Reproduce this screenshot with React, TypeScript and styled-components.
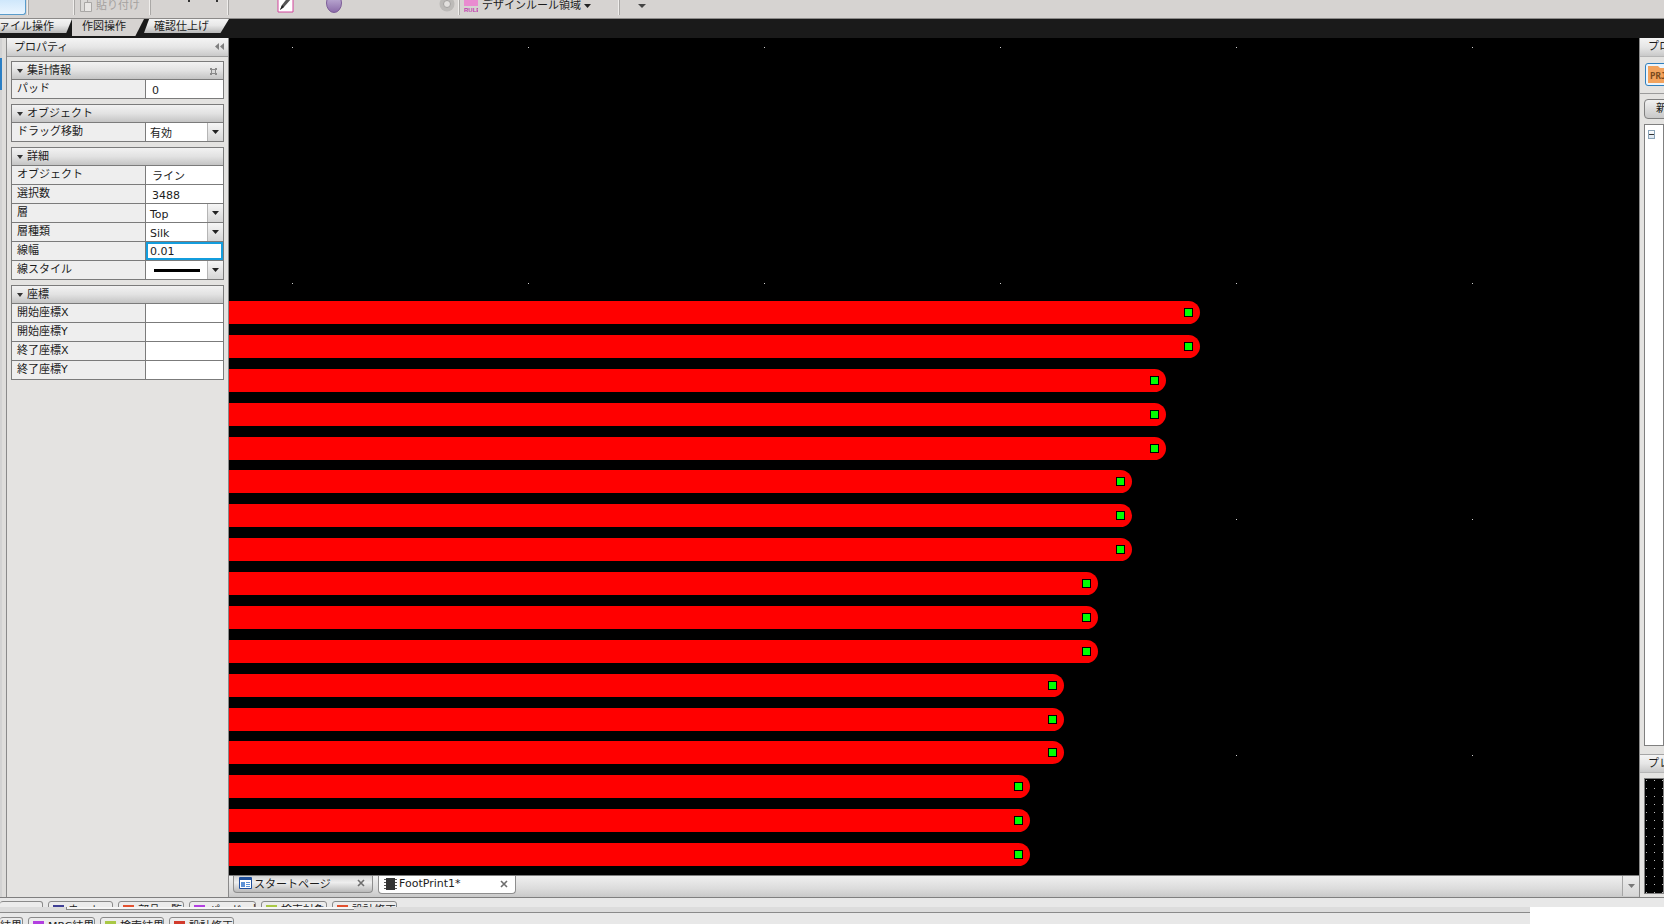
import styled, { createGlobalStyle } from "styled-components";

const GlobalStyle = createGlobalStyle`
html, body {
    margin: 0;
    padding: 0;
    background: #e4e3e1;
}
* {
    box-sizing: border-box;
}
`

const Page = styled.div`
width: 1664px;
height: 924px;
overflow: hidden;
display: flex;
flex-direction: column;
font-family: "DejaVu Sans", "Noto Sans CJK JP", sans-serif;
font-size: 11px;
color: #1c1c1c;
`

const Toolbar = styled.div`
height: 19px;
flex: none;
display: flex;
background: #d6d3d1;
border-bottom: 1px solid #8c8a89;
overflow: hidden;
`

const ToolGroup = styled.div<{ $w: number; $pad?: number; $plain?: boolean }>`
width: ${(p) => p.$w}px;
flex: none;
height: 15px;
padding-left: ${(p) => p.$pad ?? 0}px;
display: flex;
align-items: flex-end;
${(p) => !p.$plain && "border-right: 1px solid #f0eeec; box-shadow: 1px 0 0 #aaa8a6;"}
`

const AppButton = styled.div`
width: 26px;
height: 15px;
background: linear-gradient(#cfe7fb, #eaf5ff);
border: 1px solid #5a9ccb;
border-top: none;
border-left: none;
border-radius: 0 0 3px 0;
`

const ToolLabel = styled.span<{ $off?: boolean }>`
color: ${(p) => (p.$off ? "#a5a2a0" : "#1c1c1c")};
line-height: 11px;
margin: 0 0 4px 4px;
white-space: nowrap;
`

const ToolIcon = styled.svg<{ $left: number }>`
flex: none;
margin-left: ${(p) => p.$left}px;
margin-bottom: 2px;
`

const TickMarks = styled.div`
width: 30px;
height: 2px;
margin: 0 0 13px 38px;
border-left: 2px solid #333;
border-right: 2px solid #333;
`

const Ribbon = styled.div`
height: 19px;
flex: none;
background: #1a1a1a;
display: flex;
align-items: flex-start;
overflow: hidden;
`

const RibbonTab = styled.div<{ $w: number; $active?: boolean; $pad: number; $clip: string }>`
width: ${(p) => p.$w}px;
height: ${(p) => (p.$active ? 17 : 14)}px;
flex: none;
padding-left: ${(p) => p.$pad}px;
line-height: 15px;
white-space: nowrap;
background: ${(p) => (p.$active ? "#d6d3d1" : "linear-gradient(#f4f4f4, #e8e8e8 45%, #b8b8b8)")};
clip-path: polygon(${(p) => p.$clip});
`

const ClippedTabName = styled.span`
margin-left: -12px;
`

const Main = styled.div`
height: 860px;
flex: none;
display: flex;
border-bottom: 1px solid #7f7f7f;
`

const LeftStrip = styled.div`
width: 7px;
flex: none;
background: #dedddb;
border-left: 2px solid #d2d2d2;
border-right: 1px solid #8a8a8a;
position: relative;
&::after {
    content: "";
    position: absolute;
    left: -2px;
    top: 20px;
    width: 2px;
    height: 32px;
    background: #2c7fc4;
}
`

const PropertyPanel = styled.div`
width: 222px;
flex: none;
background: #e4e3e1;
border-right: 1px solid #8a8a8a;
`

const PanelTitle = styled.div`
height: 19px;
display: flex;
align-items: center;
justify-content: space-between;
padding: 0 4px 2px 7px;
background: linear-gradient(#f4f4f4, #e6e6e6 50%, #c9c9c9);
border-bottom: 1px solid #9b9b9b;
`

const GroupList = styled.div`
padding: 4px 4px 0 4px;
display: flex;
flex-direction: column;
gap: 5px;
`

const Group = styled.div`
border: 1px solid #7b7b7b;
`

const GroupHead = styled.div`
height: 18px;
display: flex;
align-items: center;
gap: 4px;
padding: 1px 6px 0 5px;
background: linear-gradient(#f2f2f2, #e2e2e2 50%, #c4c4c4);
border-bottom: 1px solid #7b7b7b;
`

const Caret = styled.i`
width: 0;
height: 0;
border-left: 3px solid transparent;
border-right: 3px solid transparent;
border-top: 4px solid #333;
`

const GroupName = styled.span`
flex: 1;
line-height: 14px;
`

const Row = styled.div`
height: 19px;
display: grid;
grid-template-columns: 134px 1fr;
border-bottom: 1px solid #7b7b7b;
&:last-child {
    height: 18px;
    border-bottom: none;
}
`

const RowLabel = styled.div`
background: #eeeeee;
border-right: 1px solid #7b7b7b;
padding-left: 5px;
line-height: 18px;
white-space: nowrap;
`

const RowValue = styled.div<{ $focus?: boolean; $select?: boolean }>`
background: #fff;
display: flex;
align-items: center;
padding-left: ${(p) => (p.$focus || p.$select ? 4 : 6)}px;
padding-top: 3px;
${(p) => p.$focus && "box-shadow: inset 0 0 0 2px #139ddd; padding-top: 2px;"}
`

const ValueText = styled.span`
flex: 1;
line-height: 14px;
`

const LineSample = styled.span`
flex: 1;
height: 3px;
margin: 0 7px 3px 4px;
background: #000;
`

const DropButton = styled.div`
width: 16px;
height: 18px;
margin-top: -3px;
flex: none;
display: flex;
align-items: center;
justify-content: center;
background: linear-gradient(#f6f6f6, #d6d6d6);
border-left: 1px solid #b5b5b5;
`

const Center = styled.div`
width: 1410px;
flex: none;
display: flex;
flex-direction: column;
`

const Canvas = styled.div`
height: 837px;
flex: none;
overflow: hidden;
background-color: #000;
background-image: radial-gradient(circle at 0.5px 0.5px, #cfcfcf 0.7px, transparent 0.8px);
background-size: 236px 236px;
background-position: 63px 9px;
padding-top: 263px;
display: flex;
flex-direction: column;
gap: 10.875px;
`

const Bar = styled.div<{ $end: number }>`
width: ${(p) => p.$end - 229}px;
height: 23px;
flex: none;
background: #ff0000;
border-radius: 0 11.5px 11.5px 0;
display: flex;
align-items: center;
justify-content: flex-end;
padding-right: 7px;
`

const BarPoint = styled.i`
width: 9px;
height: 9px;
background: #00ff00;
border: 1px solid #000;
`

const DocBar = styled.div`
height: 22px;
flex: none;
display: flex;
align-items: flex-start;
gap: 5px;
padding-left: 4px;
background: linear-gradient(#efefef, #dcdcdc 60%, #c9c9c9);
border-top: 1px solid #7d7d7d;
`

const DocTab = styled.div<{ $active?: boolean }>`
width: ${(p) => (p.$active ? 138 : 140)}px;
height: ${(p) => (p.$active ? 18 : 17)}px;
flex: none;
display: flex;
align-items: center;
gap: 2px;
padding: 0 7px 2px 5px;
background: ${(p) => (p.$active ? "#fff" : "linear-gradient(#d4d4d4, #eeeeee 40%, #b9b9b9)")};
border: 1px solid #8e8e8e;
border-top: none;
border-radius: 0 0 4px 4px;
`

const DocName = styled.span`
flex: 1;
white-space: nowrap;
`

const ScrollDown = styled.div`
width: 17px;
height: 20px;
flex: none;
margin-left: auto;
display: flex;
align-items: center;
justify-content: center;
background: linear-gradient(#ececec, #d6d6d6);
border-left: 1px solid #a5a5a5;
`

const RightPanel = styled.div`
width: 25px;
flex: none;
display: flex;
flex-direction: column;
overflow: hidden;
background: #e4e3e1;
border-left: 1px solid #8a8a8a;
`

const RightTitle = styled.div`
height: 19px;
flex: none;
padding: 2px 0 0 8px;
line-height: 14px;
white-space: nowrap;
background: linear-gradient(#f4f4f4, #e6e6e6 50%, #c9c9c9);
border-bottom: 1px solid #b5b5b5;
`

const RightIconRow = styled.div`
height: 37px;
flex: none;
padding: 6px 0 0 5px;
border-bottom: 1px solid #9b9b9b;
`

const PrjButton = styled.div`
width: 40px;
height: 23px;
padding: 2px;
border: 1px solid #2f7fbd;
border-radius: 3px;
background: #eaf4fc;
`

const NewButton = styled.div`
width: 60px;
height: 20px;
flex: none;
margin: 5px 0 5px 4px;
padding-left: 11px;
line-height: 18px;
white-space: nowrap;
background: linear-gradient(#f2f2f2, #dcdcdc 50%, #c8c8c8);
border: 1px solid #808080;
border-radius: 4px;
`

const TreeBox = styled.div`
height: 622px;
flex: none;
margin-left: 4px;
padding: 5px 0 0 3px;
display: flex;
gap: 8px;
background: #fff;
border: 1px solid #808080;
`

const TreeToggle = styled.div`
width: 9px;
height: 9px;
display: flex;
align-items: center;
justify-content: center;
background: linear-gradient(#fff, #d8e4ef);
border: 1px solid #8aa3b8;
&::after {
    content: "";
    width: 5px;
    height: 1px;
    background: #333;
}
`

const TreeNodeIcon = styled.div`
width: 12px;
height: 14px;
margin-top: -2px;
background: #2f62ab;
`

const PreviewHead = styled(RightTitle)`
margin-top: 8px;
border-top: 1px solid #a5a5a5;
`

const Preview = styled.div`
height: 116px;
flex: none;
margin: 5px 0 0 4px;
background-color: #000;
background-image: radial-gradient(circle at 1.5px 1.5px, #bdbdbd 0.7px, transparent 0.8px);
background-size: 8px 8px;
border: 1px solid #808080;
`

const Footer = styled.div`
flex: 1;
min-height: 0;
display: flex;
flex-direction: column;
background: #e8e8e8;
`

const TabRowUpper = styled.div`
height: 9px;
flex: none;
padding-top: 3px;
display: flex;
gap: 5px;
overflow: hidden;
`

const PaneTab = styled.div<{ $w: number; $color: string; $first?: boolean }>`
width: ${(p) => p.$w}px;
height: 20px;
flex: none;
display: flex;
gap: 4px;
padding: 3px 0 0 ${(p) => (p.$first ? 0 : 4)}px;
white-space: nowrap;
line-height: 12px;
background: #ececec;
border: 1px solid #8a8a8a;
border-left: ${(p) => (p.$first ? "none" : "1px solid #8a8a8a")};
border-radius: 3px 3px 0 0;
overflow: hidden;
&::before {
    content: "";
    display: ${(p) => (p.$first ? "none" : "block")};
    width: 11px;
    height: 11px;
    flex: none;
    background: ${(p) => p.$color};
}
`

const FooterLower = styled.div`
flex: 1;
min-height: 0;
display: flex;
`

const FooterLeft = styled.div`
flex: 1;
display: flex;
flex-direction: column;
`

const Sash = styled.div`
height: 6px;
flex: none;
background: #dcdcdc;
border-bottom: 1px solid #8a8a8a;
&::before {
    content: "";
    display: block;
    width: 287px;
    height: 2px;
    margin-left: 66px;
    background: #f6f6f6;
    border-bottom: 1px solid #8a8a8a;
    border-left: 1px solid #8a8a8a;
}
`

const TabRowLower = styled.div`
flex: 1;
padding-top: 4px;
display: flex;
gap: 5px;
overflow: hidden;
`

const BlankBlock = styled.div`
width: 134px;
flex: none;
background: #fff;
`

const bars = [1200, 1200, 1166, 1166, 1166, 1132, 1132, 1132, 1098, 1098, 1098, 1064, 1064, 1064, 1030, 1030, 1030];

type PropRow = { label: string; value?: string; select?: boolean; focus?: boolean; line?: boolean };
type PropGroup = { name: string; gear?: boolean; rows: PropRow[] };

const groups: PropGroup[] = [
    { name: "集計情報", gear: true, rows: [{ label: "パッド", value: "0" }] },
    { name: "オブジェクト", rows: [{ label: "ドラッグ移動", value: "有効", select: true }] },
    {
        name: "詳細",
        rows: [
            { label: "オブジェクト", value: "ライン" },
            { label: "選択数", value: "3488" },
            { label: "層", value: "Top", select: true },
            { label: "層種類", value: "Silk", select: true },
            { label: "線幅", value: "0.01", focus: true },
            { label: "線スタイル", line: true, select: true },
        ],
    },
    {
        name: "座標",
        rows: [
            { label: "開始座標X" },
            { label: "開始座標Y" },
            { label: "終了座標X" },
            { label: "終了座標Y" },
        ],
    },
];

const upperTabs = [
    { w: 43, color: "#ececec", label: "", first: true },
    { w: 65, color: "#3f3f95", label: "ネット一覧" },
    { w: 66, color: "#e2512f", label: "部品一覧" },
    { w: 67, color: "#b23fe0", label: "パッド一覧" },
    { w: 66, color: "#a9c845", label: "検索対象" },
    { w: 65, color: "#e2512f", label: "設計修正" },
];

const lowerTabs = [
    { w: 23, color: "#ececec", label: "結果", first: true },
    { w: 67, color: "#b23fe0", label: "MRC結果" },
    { w: 64, color: "#a9c845", label: "検索結果" },
    { w: 65, color: "#d23b2c", label: "設計修正" },
];

function DownArrow({ color = "#222" }: { color?: string }) {
    return (
        <svg width="7" height="4" viewBox="0 0 7 4">
            <path d="M0 0h7L3.500 4z" fill={color} />
        </svg>
    );
}

function CloseX() {
    return (
        <svg width="8" height="8" viewBox="0 0 8 8">
            <path d="M1 1l6 6M7 1L1 7" stroke="#6d6d6d" strokeWidth="1.6" />
        </svg>
    );
}

function App() {
    return (
        <Page lang="ja">
            <GlobalStyle />
            <Toolbar>
                <ToolGroup $w={28}>
                    <AppButton />
                </ToolGroup>
                <ToolGroup $w={46} />
                <ToolGroup $w={76} $pad={5}>
                    <ToolIcon $left={0} width="13" height="18" viewBox="0 0 13 18">
                        <path d="M1.500 1.500h7v15h-7z" fill="#dbd9d7" stroke="#a9a7a5" />
                        <path d="M5.500 7.500h7v9h-7z" fill="#e9e7e5" stroke="#a9a7a5" />
                    </ToolIcon>
                    <ToolLabel $off>貼り付け</ToolLabel>
                </ToolGroup>
                <ToolGroup $w={78}>
                    <TickMarks />
                </ToolGroup>
                <ToolGroup $w={231} $pad={49}>
                    <ToolIcon $left={0} width="17" height="18" viewBox="0 0 17 18">
                        <path d="M1 1h15v16H1z" fill="#fff" stroke="#d2459c" />
                        <path d="M3 15l2-5 7-9 3 2-8 9z" fill="#555" />
                        <path d="M3 15l2-5 2 2z" fill="#222" />
                    </ToolIcon>
                    <ToolIcon $left={32} width="16" height="20" viewBox="0 0 16 20">
                        <defs>
                            <linearGradient id="violet" x1="0" y1="0" x2="0" y2="1">
                                <stop offset="0" stopColor="#cbbfe0" />
                                <stop offset="1" stopColor="#8a6aa8" />
                            </linearGradient>
                        </defs>
                        <ellipse cx="8" cy="10" rx="7.500" ry="9.500" fill="url(#violet)" stroke="#7d5d98" />
                    </ToolIcon>
                    <ToolIcon $left={97} width="16" height="20" viewBox="0 0 16 20">
                        <circle cx="8" cy="11" r="7.500" fill="#bcbab8" />
                        <circle cx="8" cy="11" r="3.500" fill="#e2e0de" stroke="#a3a1a0" />
                    </ToolIcon>
                </ToolGroup>
                <ToolGroup $w={160} $pad={5}>
                    <ToolIcon $left={0} width="14" height="16" viewBox="0 0 14 16">
                        <path d="M0 0h14v9H0z" fill="#e98bd0" />
                        <text x="0" y="15" fontSize="6" fontWeight="700" fill="#c23bb0" fontFamily="Liberation Sans, sans-serif">RULE</text>
                    </ToolIcon>
                    <ToolLabel>デザインルール領域</ToolLabel>
                    <ToolIcon $left={3} width="7" height="9" viewBox="0 0 7 9">
                        <path d="M0 0h7L3.500 4z" fill="#222" />
                    </ToolIcon>
                </ToolGroup>
                <ToolGroup $plain $w={40} $pad={19}>
                    <ToolIcon $left={0} width="8" height="9" viewBox="0 0 8 9">
                        <path d="M0 0h8L4 4z" fill="#444" />
                    </ToolIcon>
                </ToolGroup>
            </Toolbar>
            <Ribbon>
                <RibbonTab $w={72} $pad={0} $clip="0 0, 100% 0, 92% 100%, 0 100%">
                    <ClippedTabName>ファイル操作</ClippedTabName>
                </RibbonTab>
                <RibbonTab $active $w={72} $pad={10} $clip="0 0, 100% 0, 88% 100%, 0 100%">作図操作</RibbonTab>
                <RibbonTab $w={85} $pad={10} $clip="6% 0, 100% 0, 90% 100%, 0 100%">確認仕上げ</RibbonTab>
            </Ribbon>
            <Main>
                <LeftStrip />
                <PropertyPanel>
                    <PanelTitle>
                        プロパティ
                        <svg width="9" height="7" viewBox="0 0 9 7">
                            <path d="M4 0v7L0 3.500zM9 0v7L5 3.500z" fill="#7f7f7f" />
                        </svg>
                    </PanelTitle>
                    <GroupList>
                        {groups.map((group) => (
                            <Group key={group.name}>
                                <GroupHead>
                                    <Caret />
                                    <GroupName>{group.name}</GroupName>
                                    {group.gear && (
                                        <svg width="7" height="7" viewBox="0 0 7 7">
                                            <path d="M0 0h2v1h3V0h2v2H6v3h1v2H5V6H2v1H0V5h1V2H0z" fill="#8a8a8a" />
                                            <path d="M2 2h3v3H2z" fill="#d8d8d8" />
                                        </svg>
                                    )}
                                </GroupHead>
                                {group.rows.map((row) => (
                                    <Row key={row.label}>
                                        <RowLabel>{row.label}</RowLabel>
                                        <RowValue $focus={row.focus} $select={row.select}>
                                            {row.line ? <LineSample /> : <ValueText>{row.value}</ValueText>}
                                            {row.select && (
                                                <DropButton>
                                                    <DownArrow />
                                                </DropButton>
                                            )}
                                        </RowValue>
                                    </Row>
                                ))}
                            </Group>
                        ))}
                    </GroupList>
                </PropertyPanel>
                <Center>
                    <Canvas>
                        {bars.map((end, index) => (
                            <Bar key={index} $end={end}>
                                <BarPoint />
                            </Bar>
                        ))}
                    </Canvas>
                    <DocBar>
                        <DocTab>
                            <svg width="13" height="12" viewBox="0 0 13 12">
                                <path d="M.500.500h12v11H.500z" fill="#fff" stroke="#1f4f9c" />
                                <path d="M1 1h11v2H1z" fill="#1f4f9c" />
                                <path d="M2 5h4v5H2z" fill="#5d92d6" />
                                <path d="M7 5h4v1H7zM7 7h4v1H7zM7 9h4v1H7z" fill="#5d92d6" />
                            </svg>
                            <DocName>スタートページ</DocName>
                            <CloseX />
                        </DocTab>
                        <DocTab $active>
                            <svg width="13" height="12" viewBox="0 0 13 12">
                                <path d="M2 0h9v12H2z" fill="#333" />
                                <path d="M0 1h2v1H0zM0 4h2v1H0zM0 7h2v1H0zM0 10h2v1H0zM11 1h2v1h-2zM11 4h2v1h-2zM11 7h2v1h-2zM11 10h2v1h-2z" fill="#555" />
                            </svg>
                            <DocName>FootPrint1*</DocName>
                            <CloseX />
                        </DocTab>
                        <ScrollDown>
                            <DownArrow color="#777" />
                        </ScrollDown>
                    </DocBar>
                </Center>
                <RightPanel>
                    <RightTitle>プロジェクト</RightTitle>
                    <RightIconRow>
                        <PrjButton>
                            <svg width="30" height="17" viewBox="0 0 30 17">
                                <path d="M0 0h10l2 2h18v15H0z" fill="#f2a25c" />
                                <text x="2" y="13" fontSize="9" fontWeight="700" fill="#7a4a1e" fontFamily="DejaVu Sans Mono, monospace">PRJ</text>
                            </svg>
                        </PrjButton>
                    </RightIconRow>
                    <NewButton>新規</NewButton>
                    <TreeBox>
                        <TreeToggle />
                        <TreeNodeIcon />
                    </TreeBox>
                    <PreviewHead>プレビュー</PreviewHead>
                    <Preview />
                </RightPanel>
            </Main>
            <Footer>
                <TabRowUpper>
                    {upperTabs.map((tab) => (
                        <PaneTab key={tab.w + tab.label} $w={tab.w} $color={tab.color} $first={tab.first}>
                            {tab.label}
                        </PaneTab>
                    ))}
                </TabRowUpper>
                <FooterLower>
                    <FooterLeft>
                        <Sash />
                        <TabRowLower>
                            {lowerTabs.map((tab) => (
                                <PaneTab key={tab.label} $w={tab.w} $color={tab.color} $first={tab.first}>
                                    {tab.label}
                                </PaneTab>
                            ))}
                        </TabRowLower>
                    </FooterLeft>
                    <BlankBlock />
                </FooterLower>
            </Footer>
        </Page>
    );
}

export default App;
